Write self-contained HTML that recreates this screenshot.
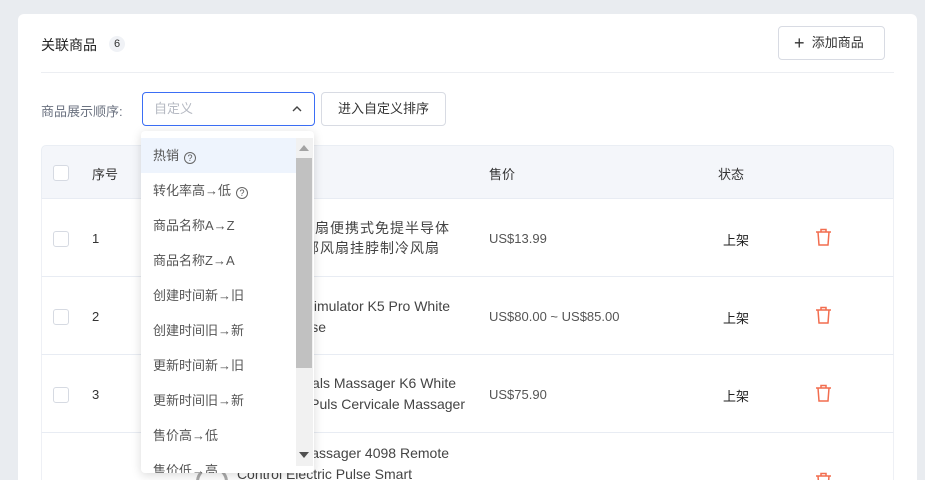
<!DOCTYPE html>
<html style="overflow:hidden;width:925px;height:480px"><head><meta charset="utf-8"><style>
*{box-sizing:border-box;margin:0;padding:0}
body{width:925px;height:480px;overflow:hidden;background:#e9ecf0;font-family:"Liberation Sans","Noto Sans CJK SC",sans-serif;font-size:13px;color:#333;position:relative}
#w{position:absolute;left:0;top:0;width:925px;height:480px;overflow:hidden}
.card{position:absolute;left:18px;top:14px;width:899px;height:466px;background:#fff;border-radius:6px 6px 0 0}
.abs{position:absolute}
.cb{position:absolute;width:16px;height:16px;border:1px solid #d6dae2;border-radius:3px;background:#fff}
.tr{position:absolute;left:41px;width:853px;height:78px;border-top:1px solid #e8ecf3;border-left:1px solid #eef0f5;border-right:1px solid #eef0f5}
.dd{position:absolute;left:141px;top:131px;width:173px;height:342px;background:#fff;border-radius:4px;box-shadow:0 2px 10px rgba(0,0,0,.15);overflow:hidden}
.it{position:absolute;left:0;width:155px;height:35px;line-height:35px;padding-left:12px;color:#555;font-size:13px}
.q{display:inline-block;width:12px;height:12px;border:1px solid #666;border-radius:50%;font-size:9px;line-height:10px;text-align:center;margin-left:5px;vertical-align:-1px}
.trash{position:absolute;left:815px}
.pl{position:absolute;white-space:nowrap;color:#444;font-size:14px;line-height:20px;text-align:right}
</style></head><body><div id="w">
<div class="card"></div>
<div class="abs" style="left:41px;top:35px;font-size:14px;color:#222">关联商品</div>
<div class="abs" style="left:109px;top:36px;width:16px;height:16px;border-radius:8px;background:#f0f2f6;font-size:11px;text-align:center;line-height:16px">6</div>
<div class="abs" style="left:778px;top:26px;width:107px;height:34px;border:1px solid #d8dbe3;border-radius:4px;font-size:13px;line-height:32px;color:#333;padding-left:15px"><span style="font-size:18px;vertical-align:-2px;font-weight:300">+</span>&nbsp; 添加商品</div>
<div class="abs" style="left:41px;top:72px;width:853px;height:1px;background:#eceef2"></div>
<div class="abs" style="left:41px;top:101px;color:#6b7280">商品展示顺序:</div>
<div class="abs" style="left:142px;top:92px;width:173px;height:34px;border:1px solid #3b6ef5;border-radius:4px;padding-left:11px;line-height:32px;color:#b5b9c2">自定义<svg style="position:absolute;right:12px;top:13px" width="10" height="6"><path d="M1 5L5 1L9 5" fill="none" stroke="#444" stroke-width="1.4"/></svg></div>
<div class="abs" style="left:321px;top:92px;width:125px;height:34px;border:1px solid #d8dbe3;border-radius:4px;text-align:center;line-height:32px;color:#333">进入自定义排序</div>
<div class="abs" style="left:41px;top:145px;width:853px;height:54px;background:#f4f6fa;border:1px solid #eaeef4;border-radius:5px 5px 0 0"></div>
<div class="cb" style="left:53px;top:165px"></div>
<div class="abs" style="left:92px;top:164px">序号</div>
<div class="abs" style="left:489px;top:164px">售价</div>
<div class="abs" style="left:718px;top:164px">状态</div>
<div class="tr" style="top:198px"></div><div class="tr" style="top:276px"></div><div class="tr" style="top:354px"></div><div class="tr" style="top:432px"></div>
<div class="cb" style="left:53px;top:231px"></div><div class="abs" style="left:92px;top:231px;color:#333">1</div>
<div class="cb" style="left:53px;top:309px"></div><div class="abs" style="left:92px;top:309px">2</div>
<div class="cb" style="left:53px;top:387px"></div><div class="abs" style="left:92px;top:387px">3</div>
<div class="pl" style="right:475px;top:218px;letter-spacing:1px">迷你空调扇便携式免提半导体</div>
<div class="pl" style="right:485px;top:238px;letter-spacing:1px">挂脖颈部风扇挂脖制冷风扇</div>
<div class="pl" style="right:475px;top:296px">Electric Stimulator K5 Pro White</div>
<div class="pl" style="right:599px;top:317px">Pulse</div>
<div class="pl" style="right:469px;top:373px">Hals Massager K6 White</div>
<div class="pl" style="right:460px;top:394px">Electric Puls Cervicale Massager</div>
<div class="pl" style="right:476px;top:443px">Massager 4098 Remote</div>
<div class="pl" style="right:513px;top:464px">Control Electric Pulse Smart</div>
<div class="abs" style="left:196px;top:466px;width:32px;height:32px;border-radius:50%;border:3px solid #aaa"></div>
<div class="abs" style="left:489px;top:231px;color:#555">US$13.99</div>
<div class="abs" style="left:489px;top:309px;color:#555">US$80.00 ~ US$85.00</div>
<div class="abs" style="left:489px;top:387px;color:#555">US$75.90</div>
<div class="abs" style="left:723px;top:230px;color:#222">上架</div>
<div class="abs" style="left:723px;top:308px;color:#222">上架</div>
<div class="abs" style="left:723px;top:386px;color:#222">上架</div>
<svg class="trash" style="top:228px" width="17" height="18"><path d="M1 4H16M6 4V1.5H11V4M3 4L4 17H13L14 4" fill="none" stroke="#f26d4f" stroke-width="1.5"/></svg>
<svg class="trash" style="top:306px" width="17" height="18"><path d="M1 4H16M6 4V1.5H11V4M3 4L4 17H13L14 4" fill="none" stroke="#f26d4f" stroke-width="1.5"/></svg>
<svg class="trash" style="top:384px" width="17" height="18"><path d="M1 4H16M6 4V1.5H11V4M3 4L4 17H13L14 4" fill="none" stroke="#f26d4f" stroke-width="1.5"/></svg>
<svg class="trash" style="top:472px" width="17" height="8"><path d="M1 4H16M6 4V1.5H11V4M3 4L4 17H13L14 4" fill="none" stroke="#f26d4f" stroke-width="1.5"/></svg>
<div class="dd">
<div class="it" style="top:7px;background:#eef4fd">热销<span class="q">?</span></div>
<div class="it" style="top:42px">转化率高→低<span class="q">?</span></div>
<div class="it" style="top:77px">商品名称A→Z</div>
<div class="it" style="top:112px">商品名称Z→A</div>
<div class="it" style="top:147px">创建时间新→旧</div>
<div class="it" style="top:182px">创建时间旧→新</div>
<div class="it" style="top:217px">更新时间新→旧</div>
<div class="it" style="top:252px">更新时间旧→新</div>
<div class="it" style="top:287px">售价高→低</div>
<div class="it" style="top:322px">售价低→高</div>
<div class="abs" style="left:155px;top:7px;width:17px;height:328px;background:#f1f1f1"></div>
<div class="abs" style="left:155px;top:27px;width:16px;height:210px;background:#c1c1c1"></div>
<svg class="abs" style="left:158px;top:14px" width="10" height="6"><path d="M0 6L5 0L10 6Z" fill="#a3a3a3"/></svg>
<svg class="abs" style="left:158px;top:321px" width="10" height="6"><path d="M0 0L5 6L10 0Z" fill="#505050"/></svg>
</div>
</div></body></html>
